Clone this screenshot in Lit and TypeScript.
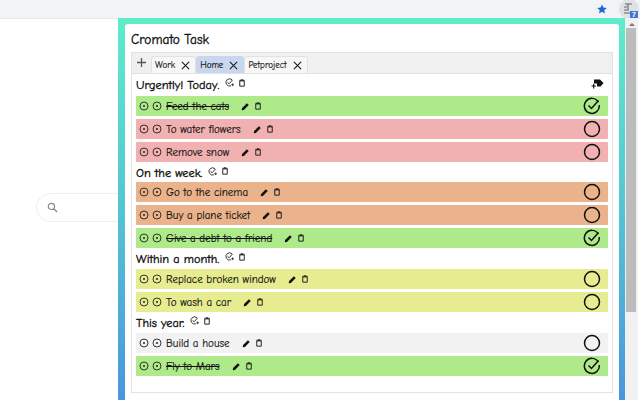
import { LitElement, html, css, svg } from "lit";
import { customElement } from "lit/decorators.js";

type Task = { text: string; color: string; done?: boolean };
type Group = { title: string; tasks: Task[] };

const GROUPS: Group[] = [
  { title: "Urgently! Today.", tasks: [
    { text: "Feed the cats", color: "green", done: true },
    { text: "To water flowers", color: "red" },
    { text: "Remove snow", color: "red" },
  ]},
  { title: "On the week.", tasks: [
    { text: "Go to the cinema", color: "orange" },
    { text: "Buy a plane ticket", color: "orange" },
    { text: "Give a debt to a friend", color: "green", done: true },
  ]},
  { title: "Within a month.", tasks: [
    { text: "Replace broken window", color: "yellow" },
    { text: "To wash a car", color: "yellow" },
  ]},
  { title: "This year.", tasks: [
    { text: "Build a house", color: "gray" },
    { text: "Fly to Mars", color: "green", done: true },
  ]},
];

const dot = svg`<circle cx="5" cy="5" r="4" fill="none" stroke="#222" stroke-width="0.9"/><circle cx="5" cy="5" r="1" fill="#222"/>`;
const dotIcon = html`<svg class="dot" viewBox="0 0 10 10">${dot}</svg>`;
const pencil = html`<svg class="pencil" viewBox="0 0 10 10"><path d="M0.8 9.2 L1.2 6.8 L6.6 1.4 L8.6 3.4 L3.2 8.8 Z" fill="#111"/></svg>`;
const trash = html`<svg class="trash" viewBox="0 0 8 10"><path d="M1 2.2 H7 V9.2 H1 Z" fill="none" stroke="#111" stroke-width="1.2"/><path d="M0.5 1.4 H7.5 M2.5 0.6 H5.5" stroke="#111" stroke-width="1"/></svg>`;
const closeIcon = html`<svg class="x" viewBox="0 0 10 10"><path d="M1 1 L9 9 M9 1 L1 9" stroke="#222" stroke-width="1.3" fill="none"/></svg>`;
const checkAdd = html`<svg class="checkadd" viewBox="0 0 10 10"><path d="M7.8 2 A4 4 0 1 0 6.6 8.6" fill="none" stroke="#222" stroke-width="1"/><path d="M2.8 4.8 L4.6 6.4 L8.4 2.2" fill="none" stroke="#222" stroke-width="1"/><path d="M7 7.5 H10 M8.5 6 V9" stroke="#222" stroke-width="0.9"/></svg>`;

@customElement("app-root")
export class AppRoot extends LitElement {
  static styles = css`
    :host { display: block; width: 640px; height: 400px; position: relative; overflow: hidden; background: #fff; font-family: "Comic Sans MS", "Comic Neue", cursive; color: #111; }
    .toolbar { height: 18px; background: #f1f3f4; border-bottom: 1px solid #e4e6e8; display: flex; align-items: center; justify-content: flex-end; gap: 12px; }
    .star { width: 10px; height: 10px; }
    .ext { width: 20px; height: 20px; border-radius: 50%; background: #dfe1e3; position: relative; margin: -1px 1px 0 0; }
    .ext svg { width: 18px; height: 18px; display: block; margin: 1px; }
    .badge { position: absolute; right: 1px; top: 12px; width: 8px; height: 8px; background: #3f78d8; color: #fff; font: bold 7px/8px "Liberation Sans", sans-serif; text-align: center; }
    .search { position: absolute; left: 36px; top: 193px; width: 200px; height: 29px; box-sizing: border-box; border: 1px solid #eeeeee; border-radius: 15px; padding: 8px 0 0 10px; }
    .search svg { display: block; width: 11px; height: 11px; }
    .popup { position: absolute; left: 118px; top: 18px; width: 507px; height: 390px; box-sizing: border-box; padding: 6px 6px 6px 7px; background: linear-gradient(180deg, #5eecca 0%, #55c8d2 45%, #4a94dc 100%); }
    .inner { background: #fff; height: 100%; box-sizing: border-box; padding: 6px 6px 0 6px; border-radius: 3px 3px 0 0; }
    h1 { margin: 0 0 3px; font-size: 13.4px; line-height: 20px; font-weight: 400; height: 19px; -webkit-text-stroke: 0.35px #111; }
    .panel { border: 1px solid #e3e3e3; height: 341px; box-sizing: border-box; }
    .tabs { height: 20px; background: #f0f0f0; border-bottom: 1px solid #e2e2e2; display: flex; align-items: flex-end; padding-left: 4px; }
    .plus { width: 11px; height: 11px; margin: 0 4px 5px 0; }
    .tab { height: 17px; display: flex; align-items: center; font-size: 9px; padding: 0 5px 0 3px; background: #f7f7f7; border: 1px solid #e2e2e2; border-bottom: none; border-radius: 3px 3px 0 0; box-sizing: border-box; -webkit-text-stroke: 0.15px #111; }
    .tab.active { background: #c9d6ef; border-color: #c9d6ef; }
    .tab span { margin-right: 6px; }
    .x { width: 9px; height: 9px; display: block; }
    .body { padding: 0 4px; }
    .label { height: 21px; display: flex; align-items: center; font-size: 12.3px; font-weight: 400; margin-bottom: 1px; -webkit-text-stroke: 0.35px #111; }
    .group + .group .label { height: 18px; margin-bottom: 0; box-sizing: border-box; }
    .group:nth-child(n+3) .label { padding-bottom: 3px; }
    .group:first-child .row:last-child { margin-bottom: 2px; }
    .label .ttl { margin-right: 6px; }
    .checkadd { width: 9px; height: 9px; margin-right: 5px; margin-top: -4px; }
    .label .trash { margin-top: -4px; }
    .tag { width: 13px; height: 11px; margin: -2px 4px 0 auto; }
    .row { height: 20px; margin-bottom: 3px; display: flex; align-items: center; padding-left: 3px; border-radius: 1px; font-size: 11px; -webkit-text-stroke: 0.15px #111; }
    .row.green { background: #aeea8a; }
    .row.red { background: #f2b1b1; }
    .row.orange { background: #eab38b; }
    .row.yellow { background: #e7ec90; }
    .row.gray { background: #f2f2f2; }
    .dot { width: 10px; height: 10px; margin-right: 3px; flex: none; }
    .text { margin-left: 1px; margin-right: 12px; white-space: nowrap; }
    .row.done .text { text-decoration: line-through; }
    .pencil { width: 9px; height: 9px; margin-right: 5px; flex: none; }
    .trash { width: 6px; height: 8px; flex: none; }
    .state { width: 18px; height: 18px; margin-left: auto; margin-right: 7px; flex: none; }
    .scroll { position: absolute; left: 625px; top: 18px; width: 13px; height: 382px; background: #f1f1f1; }
    .arrow { width: 0; height: 0; margin: 5px auto 0; border: 3px solid transparent; border-top: none; border-bottom: 3px solid #777; }
    .thumb { position: absolute; left: 1px; top: 10px; width: 10px; height: 284px; background: #bcbcbc; }
  `;

  private state(done?: boolean) {
    return html`<svg class="state" viewBox="0 0 18 18">
      ${done
        ? svg`<path d="M15.4 5.2 A7.5 7.5 0 1 0 16.3 8" fill="none" stroke="#111" stroke-width="1.5"/><path d="M5.5 8.5 L8.5 11.5 L15.5 3.5" fill="none" stroke="#111" stroke-width="1.5"/>`
        : svg`<circle cx="9" cy="9" r="7.5" fill="none" stroke="#111" stroke-width="1.5"/>`}
    </svg>`;
  }

  render() {
    return html`
      <div class="toolbar">
        <svg class="star" viewBox="0 0 24 24"><path d="M12 1 L15.4 8.6 L23.5 9.4 L17.4 14.9 L19.2 23 L12 18.8 L4.8 23 L6.6 14.9 L0.5 9.4 L8.6 8.6 Z" fill="#1a66e0"/></svg>
        <div class="ext">
          <svg viewBox="0 0 18 18"><path d="M5 4 H12 M8 4 V11 M4 7 H7 M4 10 H7 M4 13 H11" stroke="#666" stroke-width="1.1" fill="none"/></svg>
          <div class="badge">7</div>
        </div>
      </div>
      <div class="search">
        <svg viewBox="0 0 12 12"><circle cx="4.8" cy="4.8" r="3.4" fill="none" stroke="#888" stroke-width="1.3"/><path d="M7.4 7.4 L11 11" stroke="#888" stroke-width="1.5"/></svg>
      </div>
      <div class="popup">
        <div class="inner">
          <h1>Cromato Task</h1>
          <div class="panel">
            <div class="tabs">
              <svg class="plus" viewBox="0 0 11 11"><path d="M5.5 1 V10 M1 5.5 H10" stroke="#555" stroke-width="1.3"/></svg>
              <div class="tab"><span>Work</span>${closeIcon}</div>
              <div class="tab active"><span>Home</span>${closeIcon}</div>
              <div class="tab"><span>Petproject</span>${closeIcon}</div>
            </div>
            <div class="body">
              ${GROUPS.map((g, i) => html`
                <div class="group">
                  <div class="label">
                    <span class="ttl">${g.title}</span>${checkAdd}${trash}
                    ${i === 0 ? html`<svg class="tag" viewBox="0 0 13 11"><path d="M3 1.5 H9 L12.5 5 L9.5 8.5 H6 V5.5 H3 Z" fill="#111"/><path d="M0.5 8 H5 M2.7 5.8 V10.4" stroke="#111" stroke-width="1.1"/></svg>` : ""}
                  </div>
                  ${g.tasks.map(t => html`
                    <div class="row ${t.color} ${t.done ? "done" : ""}">
                      ${dotIcon}${dotIcon}
                      <span class="text">${t.text}</span>
                      ${pencil}${trash}
                      ${this.state(t.done)}
                    </div>`)}
                </div>`)}
            </div>
          </div>
        </div>
      </div>
      <div class="scroll"><div class="arrow"></div><div class="thumb"></div></div>
    `;
  }
}
